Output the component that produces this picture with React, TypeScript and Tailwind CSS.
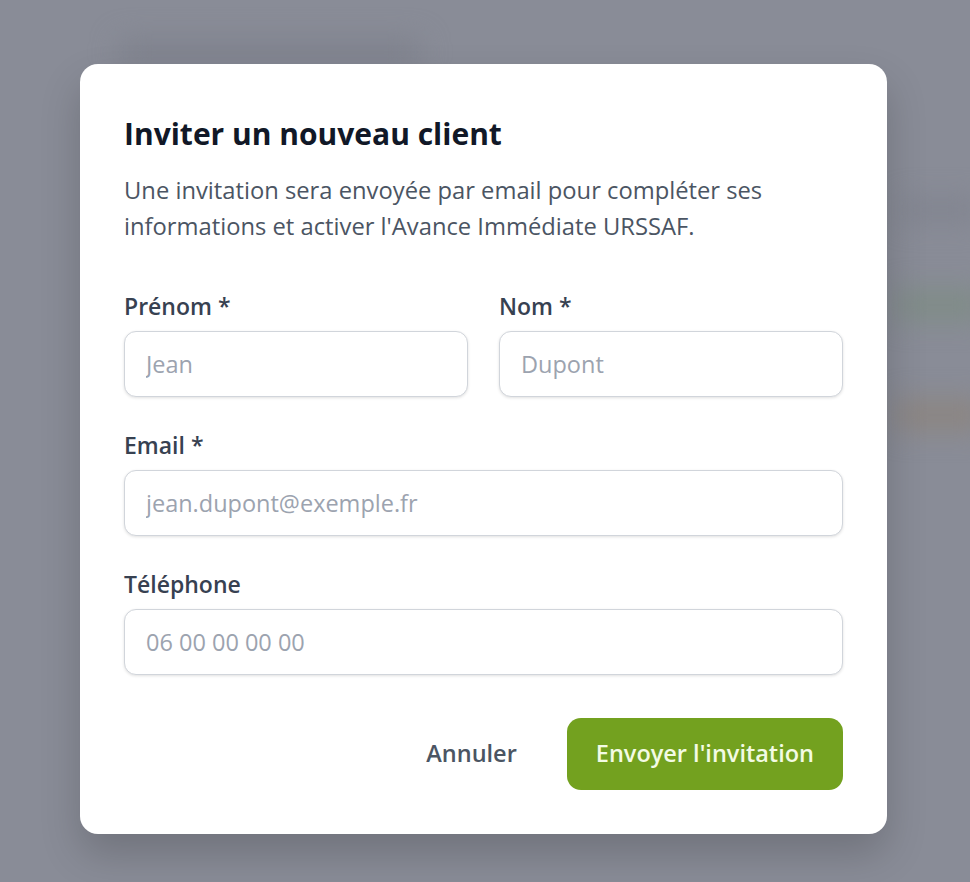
function Field({ label, placeholder, type = 'text' }: { label: string; placeholder: string; type?: string }) {
  return (
    <div className="flex flex-col">
      <label className="text-[23px] font-semibold text-[#374151] leading-[30px] mb-[10px]">{label}</label>
      <input
        type={type}
        placeholder={placeholder}
        className="h-[66px] w-full rounded-[12px] border border-[#d1d5db] bg-white px-[21px] text-[23.5px] text-[#111827] shadow-[0_1px_3px_rgba(0,0,0,0.12)] outline-none placeholder:text-[#9ca3af]"
      />
    </div>
  )
}

export default function App() {
  return (
    <div
      className="relative h-[882px] w-[970px] overflow-hidden bg-[#898c97]"
      style={{ fontFamily: '"Open Sans", "Noto Sans", sans-serif' }}
    >
      {/* blurred page behind the overlay */}
      <div className="absolute inset-0 blur-[14px]">
        <div className="absolute left-[120px] top-[40px] h-[24px] w-[300px] rounded bg-[#7e818c]" />
        <div className="absolute left-[900px] top-[200px] h-[20px] w-[80px] bg-[#80838e]" />
        <div className="absolute left-[895px] top-[290px] h-[30px] w-[90px] bg-[#7f8c86]" />
        <div className="absolute left-[895px] top-[400px] h-[30px] w-[90px] bg-[#8c8580]" />
      </div>

      <div className="relative pt-[64px] pl-[80px]">
        <div className="w-[807px] rounded-[18px] bg-white px-[44px] pt-[50px] pb-[44px] shadow-[0_20px_40px_rgba(0,0,0,0.18)]">
          <h2 className="text-[30px] font-bold leading-[40px] text-[#111827]">Inviter un nouveau client</h2>
          <p className="mt-[18px] text-[23.75px] leading-[36px] text-[#4b5563]">
            Une invitation sera envoyée par email pour compléter ses informations et activer l'Avance Immédiate URSSAF.
          </p>

          <div className="mt-[47px] flex flex-col gap-[33px]">
            <div className="grid grid-cols-2 gap-[31px]">
              <Field label="Prénom *" placeholder="Jean" />
              <Field label="Nom *" placeholder="Dupont" />
            </div>
            <Field label="Email *" placeholder="jean.dupont@exemple.fr" type="email" />
            <Field label="Téléphone" placeholder="06 00 00 00 00" type="tel" />
          </div>

          <div className="mt-[43px] flex items-center justify-end gap-[20px]">
            <button className="px-[30px] py-[18px] text-[23.5px] font-semibold text-[#4b5563]">Annuler</button>
            <button className="h-[72px] rounded-[14px] bg-[#73a11f] px-[29px] text-[23.5px] font-semibold text-[#f3fbe4]">
              Envoyer l'invitation
            </button>
          </div>
        </div>
      </div>
    </div>
  )
}
